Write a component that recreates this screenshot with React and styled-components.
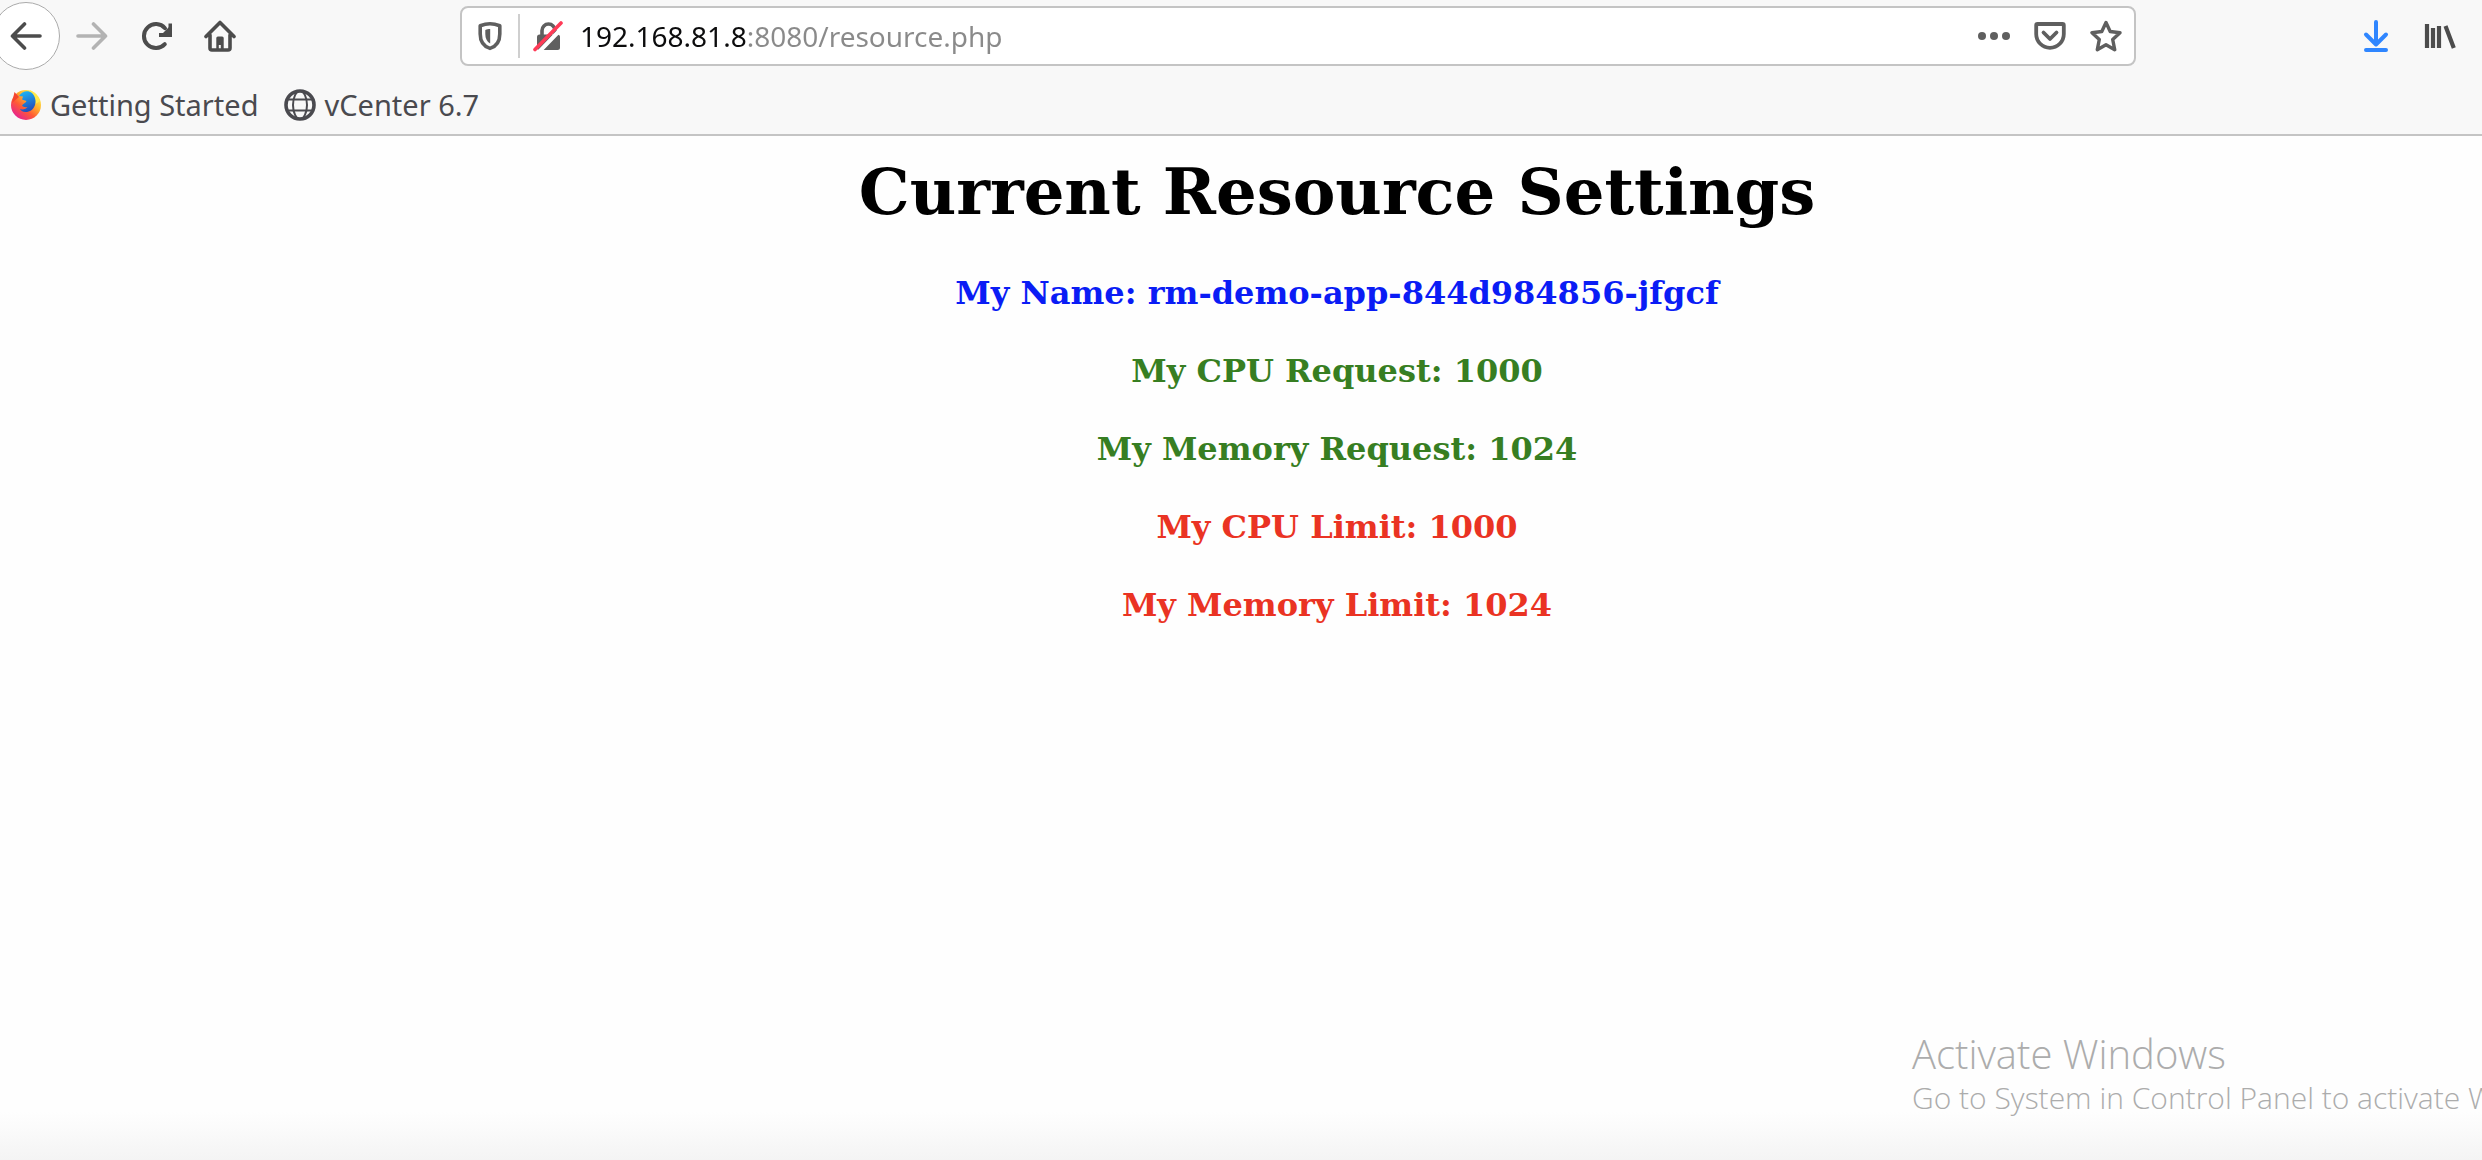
import React from "react";
import styled, { createGlobalStyle } from "styled-components";

const GlobalStyle = createGlobalStyle`
  * { box-sizing: border-box; }
  body { margin: 0; background: #fefefe; }
  button { font: inherit; border: 0; background: none; padding: 0; cursor: pointer; }
`;

const uiFont = `"Noto Sans", "Open Sans", sans-serif`;

const Window = styled.div`
  min-height: 100vh;
  display: flex;
  flex-direction: column;
  position: relative;
  overflow: hidden;
  background: linear-gradient(to top, #f4f4f4, #fefefe 48px);
`;

const Chrome = styled.header`
  background: #f8f8f8;
  border-bottom: 2px solid #c4c4c4;
  font-family: ${uiFont};
`;

const NavBar = styled.div`
  display: flex;
  align-items: center;
  height: 72px;
`;

const NavGroup = styled.nav`
  display: flex;
  align-items: center;
  flex: 0 0 460px;
`;

const ActionGroup = styled.div`
  display: flex;
  justify-content: flex-end;
  flex: 0 0 346px;
  padding-right: 10px;
`;

const IconButton = styled.button`
  display: flex;
  flex: none;
  align-items: center;
  justify-content: center;
  width: ${(p) => p.$width || 64}px;
  height: 56px;
  color: ${(p) => p.$color || "#4c4c4c"};
`;

const BackButton = styled(IconButton)`
  width: 68px;
  height: 68px;
  margin-left: -8px;
  border: 1px solid #ababab;
  border-radius: 50%;
  background: #fff;
`;

const AddressBar = styled.form`
  display: flex;
  align-items: center;
  flex: 1;
  min-width: 0;
  height: 60px;
  border: 2px solid #c4c4c4;
  border-radius: 8px;
  background: #fff;
`;

const Divider = styled.span`
  width: 2px;
  height: 44px;
  background: #cfcfcf;
`;

const AddressInput = styled.input`
  flex: 1;
  min-width: 0;
  height: 52px;
  padding: 0 4px;
  border: 0;
  outline: 0;
  font-family: ${uiFont};
  font-size: 28px;
  color: #8a8a8a;
  background: linear-gradient(to right, #0c0c0d 171px, #8a8a8a 171px);
  background-clip: text;
  -webkit-text-fill-color: transparent;
`;

const Bookmarks = styled.nav`
  display: flex;
  align-items: center;
  gap: 26px;
  height: 62px;
  padding: 4px 10px 0;
`;

const Bookmark = styled.a`
  display: flex;
  align-items: center;
  gap: 8px;
  font-size: 29px;
  line-height: 40px;
  color: #4a4a4f;
  text-decoration: none;
  white-space: nowrap;
`;

const Content = styled.main`
  display: flex;
  flex-direction: column;
  align-items: center;
  gap: 36px;
  padding: 16px 0 36px 192px;
  font-family: "DejaVu Serif", serif;
  text-align: center;
`;

const Title = styled.h1`
  margin: 0;
  font-size: 64px;
  line-height: 80px;
  color: #000;
`;

const Settings = styled.section`
  display: flex;
  flex-direction: column;
  gap: 36px;
  padding-top: 4px;
`;

const Setting = styled.h3`
  margin: 0;
  font-size: 32px;
  line-height: 42px;
  color: ${(p) => p.$color};
`;

const Watermark = styled.aside`
  position: absolute;
  left: 1912px;
  bottom: 42px;
  font-family: "Open Sans", sans-serif;
  font-weight: 300;
  color: #acacac;
  white-space: nowrap;
`;

const WatermarkTitle = styled.p`
  margin: 0;
  font-size: 40px;
  line-height: 48px;
`;

const WatermarkText = styled.p`
  margin: 0;
  font-size: 30px;
  line-height: 40px;
`;

const Icon = ({ children, width = 3.6, size = 32 }) => (
  <svg width={size} height={size} viewBox="0 0 32 32" fill="none" stroke="currentColor"
    strokeWidth={width} strokeLinecap="round" strokeLinejoin="round" aria-hidden="true">
    {children}
  </svg>
);

const BackIcon = () => <Icon><path d="M30 16H3M14.5 4 2.5 16l12 12" /></Icon>;
const ForwardIcon = () => <Icon><path d="M2 16h27M17.5 4l12 12-12 12" /></Icon>;
const ReloadIcon = () => (
  <Icon width={4}>
    <path d="M24.8 24.2A12 12 0 1 1 25 8.2" />
    <path d="M30.5 3.5V15H19" strokeLinejoin="miter" strokeLinecap="butt" />
    <path d="M22 14 30 6v8z" fill="currentColor" stroke="none" />
  </Icon>
);
const HomeIcon = () => (
  <Icon width={3.6}>
    <path d="M2 16.5 16 2.5l14 14M6 15v13q0 2 2 2h16q2 0 2-2V15" />
    <path d="M12.3 30V18q0-1.6 1.6-1.6h4.2q1.6 0 1.6 1.6v12h-2.9v-5h-2v5z" fill="currentColor" stroke="none" />
  </Icon>
);
const ShieldIcon = () => (
  <Icon width={3.6}>
    <path d="M16 3.8c-3.400 0-6.500.7-9.800 1.900V14c0 7.600 3.200 12.300 9.800 14.400 6.600-2.100 9.800-6.800 9.800-14.400V5.700C22.500 4.500 19.400 3.800 16 3.800z" />
    <path d="M16.200 9v14.500c-3.200-1.800-4.900-4.900-4.900-9.500V9.900c1.600-.6 3-.9 4.900-.9z" fill="currentColor" stroke="none" />
  </Icon>
);
const InsecureIcon = () => (
  <Icon>
    <rect x="5" y="14.500" width="23" height="15.500" rx="2.500" fill="currentColor" stroke="none" />
    <path d="M10 16v-5.500a6.500 6.500 0 0 1 13 0V16" />
    <path d="M6 33 32 6" stroke="#fff" strokeWidth="4" />
    <path d="M3 29.500 29 3" stroke="#ff3b57" strokeWidth="3.600" />
  </Icon>
);
const MoreIcon = () => (
  <Icon><g fill="currentColor" stroke="none">
    <circle cx="4" cy="16" r="4" /><circle cx="16" cy="16" r="4" /><circle cx="28" cy="16" r="4" />
  </g></Icon>
);
const PocketIcon = () => (
  <Icon width={3.8}>
    <path d="M3.500 4h25q1.300 0 1.300 1.300V14a13.800 13.800 0 0 1-27.600 0V5.300Q2.200 4 3.500 4z" />
    <path d="m9.500 12.500 6.500 6.500 6.500-6.500" />
  </Icon>
);
const StarIcon = () => (
  <Icon width={3.400}>
    <path d="m16 2.500 4.200 9L30 12.700l-7.300 6.800 2 10.200-8.700-4.900-8.700 4.900 2-10.200L2 12.700l9.800-1.200z" />
  </Icon>
);
const DownloadIcon = () => (
  <Icon width={4}><path d="M16 2v22M6 14.500 16 24.500l10-10M6 30h20" /></Icon>
);
const LibraryIcon = () => (
  <Icon width={4}><path d="M3 4v24M9 8v20M15 6v22M21.500 6l8.300 22" strokeLinecap="butt" strokeWidth="4.200" /></Icon>
);
const GlobeIcon = () => (
  <Icon width={3.600}>
    <circle cx="16" cy="16" r="14" />
    <g strokeWidth="2"><ellipse cx="16" cy="16" rx="7" ry="14" /><path d="M4 10.500h24M4 21.500h24" /></g>
  </Icon>
);
const FirefoxIcon = () => (
  <svg width="32" height="32" viewBox="0 0 32 32" aria-hidden="true">
    <defs>
      <linearGradient id="fox" x1="0.850" y1="0.100" x2="0.200" y2="0.900">
        <stop offset="0" stopColor="#fff44f" />
        <stop offset="0.350" stopColor="#ffb02e" />
        <stop offset="0.650" stopColor="#ff5a36" />
        <stop offset="1" stopColor="#e8258c" />
      </linearGradient>
      <linearGradient id="sky" x1="0.300" y1="0" x2="0.600" y2="1">
        <stop offset="0" stopColor="#1bb4f5" />
        <stop offset="1" stopColor="#2447b8" />
      </linearGradient>
    </defs>
    <circle cx="16" cy="16" r="15" fill="url(#fox)" />
    <path d="M2 14 4.500 3 9 8z" fill="#f4452f" />
    <path d="M20 1 26 5l4 7-6 4z" fill="#ffe94a" />
    <path d="M9 7C12 2 18 1 22 4c3 3 4.500 8 3 12-1.500 4.500-5 7-9.500 7-3 0-5-1.500-5.500-3 3 1 6 0 7.500-2-2.500.5-4.500 0-5.500-1.500 1-2 4-2.500 4.500-4.500L12 10.500 13 7.500z" fill="url(#sky)" />
  </svg>
);

const settings = [
  { label: "My Name", value: "rm-demo-app-844d984856-jfgcf", color: "#0a1cf5" },
  { label: "My CPU Request", value: "1000", color: "#377e22" },
  { label: "My Memory Request", value: "1024", color: "#377e22" },
  { label: "My CPU Limit", value: "1000", color: "#ea3323" },
  { label: "My Memory Limit", value: "1024", color: "#ea3323" },
];

export default function App() {
  return (
    <Window>
      <GlobalStyle />
      <Chrome>
        <NavBar>
          <NavGroup aria-label="Navigation">
            <BackButton aria-label="Back"><BackIcon /></BackButton>
            <IconButton aria-label="Forward" $color="#b3b3b3"><ForwardIcon /></IconButton>
            <IconButton aria-label="Reload"><ReloadIcon /></IconButton>
            <IconButton aria-label="Home"><HomeIcon /></IconButton>
          </NavGroup>
          <AddressBar onSubmit={(e) => e.preventDefault()}>
            <IconButton type="button" aria-label="Tracking protection" $width={56} $color="#5f5f5f"><ShieldIcon /></IconButton>
            <Divider />
            <IconButton type="button" aria-label="Connection is not secure" $width={56} $color="#5f5f5f"><InsecureIcon /></IconButton>
            <AddressInput aria-label="Address" defaultValue="192.168.81.8:8080/resource.php" spellCheck={false} />
            <IconButton type="button" aria-label="Page actions" $width={56} $color="#5f5f5f"><MoreIcon /></IconButton>
            <IconButton type="button" aria-label="Save to Pocket" $width={56} $color="#5f5f5f"><PocketIcon /></IconButton>
            <IconButton type="button" aria-label="Bookmark this page" $width={56} $color="#5f5f5f"><StarIcon /></IconButton>
          </AddressBar>
          <ActionGroup>
            <IconButton aria-label="Downloads" $color="#2f86ff"><DownloadIcon /></IconButton>
            <IconButton aria-label="Library"><LibraryIcon /></IconButton>
          </ActionGroup>
        </NavBar>
        <Bookmarks aria-label="Bookmarks">
          <Bookmark href="#getting-started"><FirefoxIcon />Getting Started</Bookmark>
          <Bookmark href="#vcenter"><GlobeIcon />vCenter 6.7</Bookmark>
        </Bookmarks>
      </Chrome>
      <Content>
        <Title>Current Resource Settings</Title>
        <Settings>
          {settings.map((s) => (
            <Setting key={s.label} $color={s.color}>{`${s.label}: ${s.value}`}</Setting>
          ))}
        </Settings>
      </Content>
      <Watermark>
        <WatermarkTitle>Activate Windows</WatermarkTitle>
        <WatermarkText>Go to System in Control Panel to activate W</WatermarkText>
      </Watermark>
    </Window>
  );
}
